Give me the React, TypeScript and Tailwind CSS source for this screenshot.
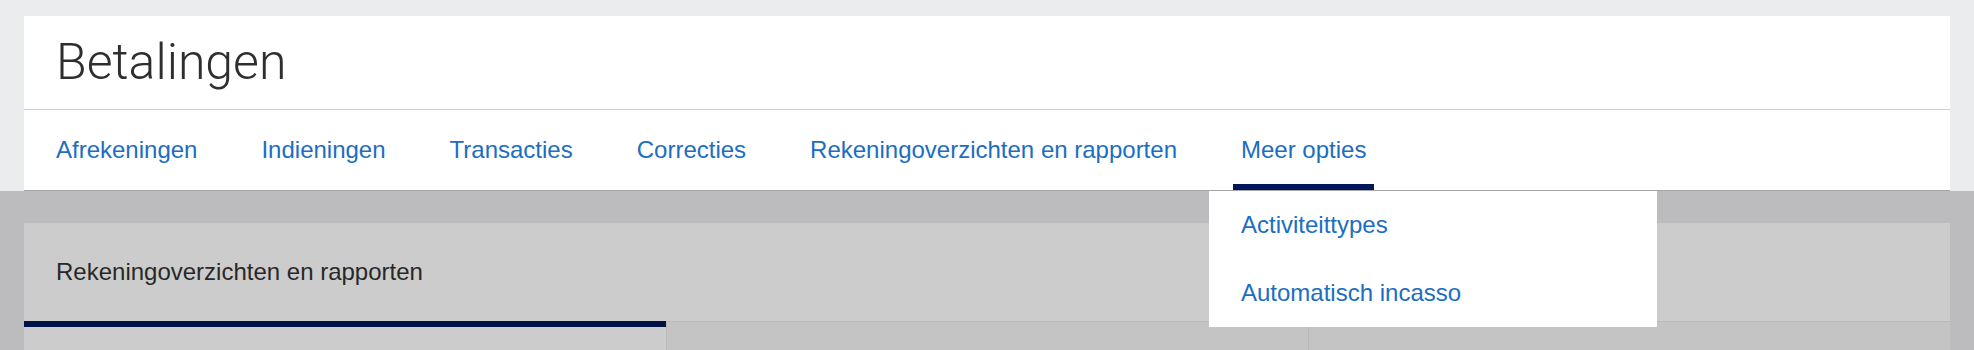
import React from 'react';

const tabs = [
  'Afrekeningen',
  'Indieningen',
  'Transacties',
  'Correcties',
  'Rekeningoverzichten en rapporten',
];

export default function App() {
  return (
    <div className="relative h-[350px] overflow-hidden bg-[#ebecee] px-6 pt-4 font-['Liberation_Sans',Arial,sans-serif]">
      {/* header card */}
      <div className="bg-white border-b border-[#a4a4a4]">
        <div className="h-[94px] border-b border-[#cfcfcf] px-8 pt-[18px]">
          <h1 className="font-['Roboto','Liberation_Sans',sans-serif] text-[50px] leading-[56px] font-light text-[#2e2e2e]">
            Betalingen
          </h1>
        </div>
        <nav className="flex h-[80px] gap-12 px-6">
          {tabs.map((t) => (
            <div key={t} className="flex items-center px-2 text-[24px] leading-[28px] text-[#1b6ec2]">
              {t}
            </div>
          ))}
          <div className="relative z-20 flex items-center px-2 text-[24px] leading-[28px] text-[#1b6ec2]">
            Meer opties
            <div className="absolute bottom-0 left-0 right-0 h-[6px] bg-[#00175a]" />
            <div className="absolute left-[-24px] top-[81px] w-[448px] bg-white">
              <div className="flex h-[68px] items-center px-8">Activiteittypes</div>
              <div className="flex h-[68px] items-center px-8">Automatisch incasso</div>
            </div>
          </div>
        </nav>
      </div>

      {/* page content */}
      <div className="mt-8 bg-white">
        <div className="flex h-[98px] items-center px-8 text-[24px] leading-[28px] text-[#333333]">
          Rekeningoverzichten en rapporten
        </div>
        <div className="grid grid-cols-3">
          <div className="h-[29px] border-t-[6px] border-[#00175a] bg-white" />
          <div className="h-[29px] border-t border-l border-[#e9e9e9] bg-[#f5f5f5]" />
          <div className="h-[29px] border-t border-l border-[#e9e9e9] bg-[#f5f5f5]" />
        </div>
      </div>

      {/* dim overlay */}
      <div className="absolute inset-x-0 bottom-0 top-[191px] z-10 bg-black/20" />
    </div>
  );
}
